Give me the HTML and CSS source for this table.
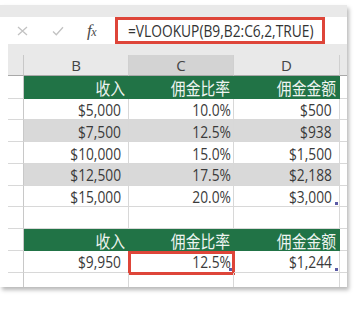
FILE: index.html
```html
<!DOCTYPE html>
<html lang="zh">
<head>
<meta charset="utf-8">
<link rel="stylesheet" href="styles.css">
</head>
<body>
<div class="sheet">
  <div class="toolbar"></div>
  <div class="fbar">
    <div class="tools">
      <svg class="ico-x" width="11" height="10" viewBox="0 0 11 10"><path d="M1 1L10 9M10 1L1 9" stroke="#c2c2c2" stroke-width="1.3" fill="none"/></svg>
      <svg class="ico-ok" width="12" height="10" viewBox="0 0 12 10"><path d="M1 5.5L4.3 8.8L11 1.2" stroke="#c2c2c2" stroke-width="1.3" fill="none"/></svg>
      <span class="fx"><i>f</i><i class="sub">x</i></span>
    </div>
    <div class="formula"><span class="ftext">=VLOOKUP(B9,B2:C6,2,TRUE)</span></div>
  </div>
  <div class="band"></div>
  <div class="grid">
    <div class="rh corner"></div><div class="ch">B</div><div class="ch sel">C</div><div class="ch">D</div><div class="tail hd"></div>

    <div class="rh"></div><div class="c g"><span class="cj">收入</span></div><div class="c g"><span class="cj">佣金比率</span></div><div class="c g"><span class="cj">佣金金额</span></div><div class="tail"></div>

    <div class="rh"></div><div class="c cur"><span class="n">$5,000</span></div><div class="c pct"><span class="n">10.0%</span></div><div class="c cur"><span class="n">$500</span></div><div class="tail"></div>
    <div class="rh"></div><div class="c cur s"><span class="n">$7,500</span></div><div class="c pct s"><span class="n">12.5%</span></div><div class="c cur s"><span class="n">$938</span></div><div class="tail"></div>
    <div class="rh"></div><div class="c cur"><span class="n">$10,000</span></div><div class="c pct"><span class="n">15.0%</span></div><div class="c cur"><span class="n">$1,500</span></div><div class="tail"></div>
    <div class="rh"></div><div class="c cur s"><span class="n">$12,500</span></div><div class="c pct s"><span class="n">17.5%</span></div><div class="c cur s"><span class="n">$2,188</span></div><div class="tail"></div>
    <div class="rh"></div><div class="c cur"><span class="n">$15,000</span></div><div class="c pct"><span class="n">20.0%</span></div><div class="c cur"><span class="n">$3,000</span><i class="dot"></i></div><div class="tail"></div>

    <div class="rh"></div><div class="c"></div><div class="c"></div><div class="c"></div><div class="tail"></div>

    <div class="rh"></div><div class="c g"><span class="cj">收入</span></div><div class="c g"><span class="cj">佣金比率</span></div><div class="c g"><span class="cj">佣金金额</span></div><div class="tail"></div>
    <div class="rh"></div><div class="c cur"><span class="n">$9,950</span></div><div class="c pct picked"><span class="n">12.5%</span><i class="dot"></i><i class="redbox"></i></div><div class="c cur"><span class="n">$1,244</span><i class="dot"></i></div><div class="tail"></div>
    <div class="rh last"></div><div class="c last"></div><div class="c last"></div><div class="c last"></div><div class="tail last"></div>
  </div>
</div>
</body>
</html>
```
FILE: styles.css
```css
html, body {
  margin: 0;
  padding: 0;
  background: #ffffff;
}
body {
  width: 360px;
  height: 314px;
  overflow: hidden;
  font-family: "Open Sans", "Noto Sans CJK SC", sans-serif;
  color: #3a3a3a;
}
.sheet {
  margin-top: 5px;
  width: 347px;
  background: #ffffff;
  box-shadow: 2px 3px 4px rgba(0, 0, 0, 0.28);
}
.toolbar {
  height: 12px;
  background: #e9e9e9;
}
.fbar {
  height: 27px;
  display: flex;
  align-items: stretch;
  background: #ffffff;
}
.tools {
  width: 115px;
  display: flex;
  align-items: center;
  padding-left: 17px;
  box-sizing: border-box;
}
.ico-x {
  margin-right: 24px;
  margin-top: 1px;
}
.ico-ok {
  margin-right: 23px;
  margin-top: 1px;
}
.fx {
  font-family: "Liberation Serif", serif;
  color: #4a4a4a;
  font-size: 17px;
  line-height: 1;
  letter-spacing: -0.5px;
}
.fx .sub {
  font-size: 12px;
}
.formula {
  width: 210px;
  box-sizing: border-box;
  border: 3px solid #de4539;
  padding-left: 10px;
  display: flex;
  align-items: center;
  overflow: hidden;
}
.ftext {
  display: inline-block;
  font-family: "Open Sans", sans-serif;
  font-size: 16px;
  color: #333333;
  white-space: nowrap;
  transform: scaleX(0.86);
  transform-origin: left center;
  padding-top: 1px;
}
.band {
  height: 11px;
  margin-left: 8px;
  background: #e9e9e9;
}
.grid {
  margin-left: 8px;
  display: grid;
  grid-template-columns: 16px 105px 105px 106px 7px;
  grid-template-rows: 21px 22.5px repeat(8, 21.8px) 14px;
}
.grid > div {
  box-sizing: border-box;
  border-bottom: 1px solid #d8d8d8;
}
.rh {
  border-right: 1px solid #c8c8c8;
  background: #ffffff;
}
.rh.corner {
  background: #e9e9e9;
  border-bottom: 1px solid #a9a9a9 !important;
}
.ch {
  background: #e9e9e9;
  border-right: 1px solid #d0d0d0;
  border-bottom: 1px solid #a9a9a9 !important;
  display: flex;
  align-items: center;
  justify-content: center;
  font-size: 15px;
  color: #444444;
}
.ch.sel {
  background: #d3d3d3;
}
.tail.hd {
  background: #e9e9e9;
  border-bottom: 1px solid #a9a9a9 !important;
}
.c {
  position: relative;
  border-right: 1px solid #d8d8d8;
  display: flex;
  align-items: center;
  justify-content: flex-end;
  padding-top: 2px;
}
.c.g {
  background: #217346;
  border-right-color: #217346;
  border-bottom-color: #217346;
  padding-right: 3px;
  padding-top: 1px;
}
.c.s {
  background: #d9d9d9;
}
.c.cur {
  padding-right: 7px;
}
.c.pct {
  padding-right: 2px;
}
.last {
  border-bottom: none !important;
}
.n {
  display: inline-block;
  font-family: "Open Sans", sans-serif;
  font-size: 16px;
  color: #3a3a3a;
  white-space: nowrap;
  transform: scaleX(0.86);
  transform-origin: right center;
}
.cj {
  display: inline-block;
  font-family: "Noto Sans CJK SC", sans-serif;
  font-size: 17px;
  color: #eef4f0;
  white-space: nowrap;
  transform: scaleX(0.87);
  transform-origin: right center;
}
.dot {
  position: absolute;
  right: 1px;
  bottom: 1px;
  width: 3px;
  height: 3px;
  background: #5b5ba6;
}
.redbox {
  position: absolute;
  top: 0;
  left: -1px;
  right: -2px;
  bottom: -3px;
  border: 3px solid #de4539;
}
```
